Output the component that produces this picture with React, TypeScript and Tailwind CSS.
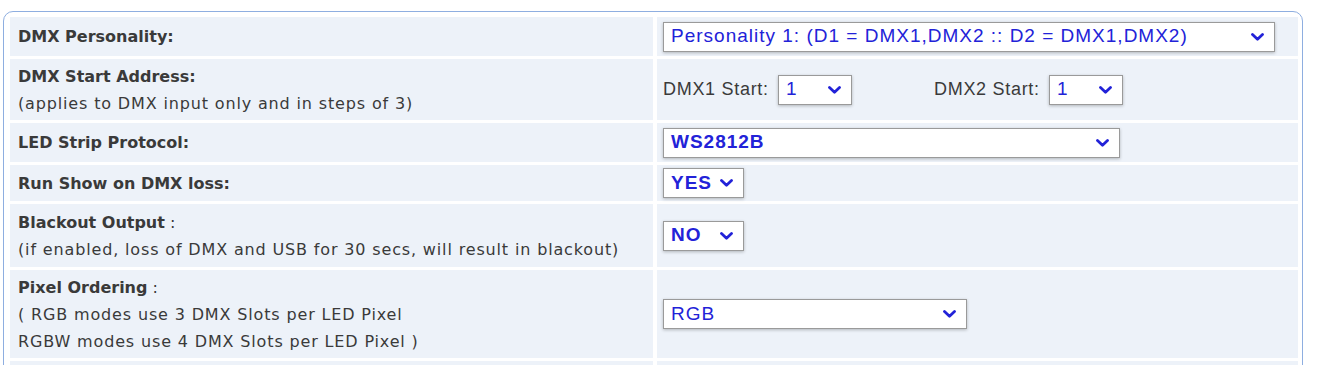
import { ReactNode } from 'react'

// Fake select box: white field, blue text, blue chevron on the right
function Select({ value, width, bold = false }: { value: string; width: string; bold?: boolean }) {
  return (
    <div
      className={`${width} h-[30px] flex items-center justify-between bg-white border border-[#9a9a9a] shadow-[0_1px_3px_rgba(0,0,0,0.25)] pl-[7px] pr-[10px] text-[#2222d8] text-[19px] tracking-[1px] ${bold ? 'font-bold' : ''}`}
      style={{ fontFamily: '"Liberation Sans", Arial, sans-serif' }}
    >
      <span className="whitespace-nowrap">{value}</span>
      <svg width="13" height="8" viewBox="0 0 13 8" className="shrink-0">
        <path d="M1.5 1.5 L6.5 6.2 L11.5 1.5" fill="none" stroke="#2222d8" strokeWidth="2.8" strokeLinecap="round" strokeLinejoin="round" />
      </svg>
    </div>
  )
}

function Row({ h, label, note, children }: { h: string; label: ReactNode; note?: string[]; children: ReactNode }) {
  return (
    <>
      <div className={`${h} bg-[#edf2f9] px-[8px] flex flex-col justify-center text-[16px] leading-[27px] text-[#3a3a3a]`}>
        <div>{label}</div>
        {note?.map(n => <div key={n} className="tracking-[0.85px]">{n}</div>)}
      </div>
      <div className={`${h} bg-[#edf2f9] px-[6px] flex items-center`}>
        {children}
      </div>
    </>
  )
}

export default function App() {
  return (
    <div className="w-[1317px] h-[378px] bg-white" style={{ fontFamily: '"DejaVu Sans", Verdana, sans-serif' }}>
      <div className="h-[365px] overflow-hidden pt-[11px] pl-[3px]">
        <div className="w-[1300px] rounded-[10px] border border-[#8eaee0] bg-white pt-[5px] pl-[6px] pr-[4px] pb-[40px]">
          <div className="grid grid-cols-[643px_641px] gap-x-[4px] gap-y-[3px]">
            <Row h="h-[39px]" label={<b>DMX Personality:</b>}>
              <Select value="Personality 1: (D1 = DMX1,DMX2 :: D2 = DMX1,DMX2)" width="w-[612px]" />
            </Row>

            <Row h="h-[61px]" label={<b>DMX Start Address:</b>} note={['(applies to DMX input only and in steps of 3)']}>
              <div
                className="flex items-center text-[18px] tracking-[0.7px] text-[#3a3a3a]"
                style={{ fontFamily: '"Liberation Sans", Arial, sans-serif' }}
              >
                <span className="w-[115px]">DMX1 Start:</span>
                <Select value="1" width="w-[74px]" />
                <span className="ml-[82px] w-[115px]">DMX2 Start:</span>
                <Select value="1" width="w-[74px]" />
              </div>
            </Row>

            <Row h="h-[39px]" label={<b>LED Strip Protocol:</b>}>
              <Select value="WS2812B" width="w-[457px]" bold />
            </Row>

            <Row h="h-[36px]" label={<b>Run Show on DMX loss:</b>}>
              <Select value="YES" width="w-[81px]" bold />
            </Row>

            <Row
              h="h-[63px]"
              label={<><b>Blackout Output</b> :</>}
              note={['(if enabled, loss of DMX and USB for 30 secs, will result in blackout)']}
            >
              <Select value="NO" width="w-[81px]" bold />
            </Row>

            <Row
              h="h-[88px]"
              label={<><b>Pixel Ordering</b> :</>}
              note={['( RGB modes use 3 DMX Slots per LED Pixel', 'RGBW modes use 4 DMX Slots per LED Pixel )']}
            >
              <Select value="RGB" width="w-[304px]" />
            </Row>

            <div className="h-[40px] bg-[#edf2f9]" />
            <div className="h-[40px] bg-[#edf2f9]" />
          </div>
        </div>
      </div>
    </div>
  )
}
